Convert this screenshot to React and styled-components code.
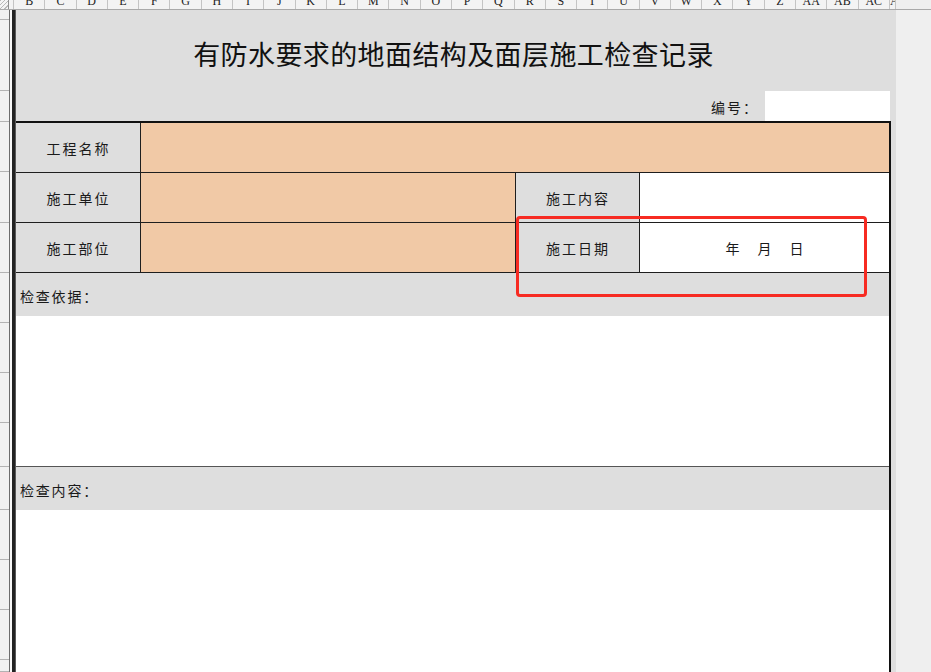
import React from 'react';
import styled, { createGlobalStyle } from 'styled-components';

const GlobalStyle = createGlobalStyle`
    html, body {
        margin: 0;
        padding: 0;
        background: #efefef;
    }
    body {
        font-family: "Noto Sans CJK SC", "Noto Sans", sans-serif;
        color: #1a1a1a;
    }
    * {
        box-sizing: border-box;
    }
`;

const Page = styled.div`
    position: relative;
    display: flex;
    flex-direction: column;
    width: 931px;
    height: 672px;
    overflow: hidden;
    background: #efefef;
`;

const ColumnBar = styled.div`
    display: flex;
    flex: 0 0 10px;
    height: 10px;
    border-bottom: 1px solid #a9a9a9;
`;

const Corner = styled.div`
    flex: 0 0 9px;
    border-right: 1px solid #8f8f8f;
    background: repeating-linear-gradient(135deg, #b9b9b9 0 1px, #f4f4f4 1px 3px);
`;

const ColHead = styled.div`
    flex: 0 0 ${p => p.$w}px;
    overflow: hidden;
    background: #f3f3f3;
    border-right: 1px solid #c4c4c4;
    font-family: "Liberation Serif", "DejaVu Serif", serif;
    font-size: 12px;
    line-height: 12px;
    color: #222;
    text-align: center;
`;

const ColLetter = styled.div`
    margin-top: -5px;
`;

const Body = styled.div`
    display: flex;
    flex: 1;
    min-height: 0;
`;

const RowHeads = styled.div`
    display: flex;
    flex-direction: column;
    flex: 0 0 10px;
    background: #f1f1f1;
    border-right: 1px solid #6d6d6d;
`;

const RowHead = styled.div`
    flex: 0 0 ${p => p.$h}px;
    border-bottom: 1px solid #b3b3b3;
`;

const FreezeGap = styled.div`
    flex: 0 0 2px;
    background: #f7f7f7;
`;

const FreezeRule = styled.div`
    flex: 0 0 4px;
    border-left: 3px solid #222;
    background: #5a5a5a;
`;

const Sheet = styled.div`
    display: flex;
    flex-direction: column;
    flex: 0 0 880px;
    background: #dedede;
`;

const TitleArea = styled.div`
    flex: 0 0 111px;
    width: 875px;
    display: flex;
    flex-direction: column;
`;

const Title = styled.h1`
    margin: 0;
    height: 81px;
    padding-top: 6px;
    font-size: 27px;
    font-weight: 400;
    line-height: 75px;
    letter-spacing: 0.4px;
    text-align: center;
    color: #111;
`;

const NumberRow = styled.div`
    display: flex;
    justify-content: flex-end;
    align-items: stretch;
    height: 30px;
    padding-right: 1px;
`;

const NumberLabel = styled.span`
    padding-right: 6px;
    font-size: 14px;
    letter-spacing: 2px;
    line-height: 33px;
`;

const NumberBox = styled.div`
    width: 125px;
    background: #fff;
`;

const Form = styled.div`
    display: flex;
    flex-direction: column;
    flex: 1;
    width: 875px;
    border-top: 2px solid #111;
    border-right: 2px solid #111;
`;

const Grid = styled.div`
    display: grid;
    grid-template-columns: 125px 375px 124px 1fr;
    grid-auto-rows: 50px;
`;

const tones = {
    label: '#dedede',
    fill: '#f1c9a6',
    blank: '#ffffff',
};

const Cell = styled.div`
    grid-column: span ${p => p.$span || 1};
    display: flex;
    align-items: center;
    justify-content: center;
    gap: 18px;
    background: ${p => tones[p.$tone]};
    border-bottom: 1px solid #1e1e1e;
    border-right: ${p => (p.$last ? 'none' : '1px solid #1e1e1e')};
    font-size: 14px;
    letter-spacing: ${p => (p.$tone === 'label' ? '2px' : '0')};
    padding-left: ${p => (p.$tone === 'label' ? '1px' : '0')};
`;

const SectionHead = styled.div`
    flex: 0 0 ${p => p.$h}px;
    display: flex;
    align-items: center;
    padding: 2px 0 0 4px;
    background: #dedede;
    font-size: 14px;
    letter-spacing: 1.8px;
`;

const SectionBody = styled.div`
    flex: ${p => (p.$h ? `0 0 ${p.$h}px` : '1')};
    background: #fff;
    border-bottom: ${p => (p.$h ? '1px solid #555' : 'none')};
`;

const Highlight = styled.div`
    position: absolute;
    left: 516px;
    top: 216px;
    width: 351px;
    height: 81px;
    border: 3px solid #f72b22;
    border-radius: 4px;
    pointer-events: none;
`;

const letters = 'B C D E F G H I J K L M N O P Q R S T U V W X Y Z AA AB AC AD'.split(' ');
const rowBounds = [20, 91, 122, 172, 223, 273, 323, 373, 423, 467, 510, 560, 610, 660, 672];

const rowHeights = rowBounds.map((b, i) => b - (i === 0 ? 10 : rowBounds[i - 1]));

export default function App() {
    return (
        <Page>
            <GlobalStyle />
            <ColumnBar>
                <Corner />
                <ColHead $w={5} />
                {letters.map((l, i) => (
                    <ColHead key={l} $w={i === letters.length - 1 ? 6 : 31.286}>
                        <ColLetter>{l}</ColLetter>
                    </ColHead>
                ))}
            </ColumnBar>
            <Body>
                <RowHeads>
                    {rowHeights.map((h, i) => (
                        <RowHead key={i} $h={h} />
                    ))}
                </RowHeads>
                <FreezeGap />
                <FreezeRule />
                <Sheet>
                    <TitleArea>
                        <Title>有防水要求的地面结构及面层施工检查记录</Title>
                        <NumberRow>
                            <NumberLabel>编号：</NumberLabel>
                            <NumberBox />
                        </NumberRow>
                    </TitleArea>
                    <Form>
                        <Grid>
                            <Cell $tone="label">工程名称</Cell>
                            <Cell $tone="fill" $span={3} $last />
                            <Cell $tone="label">施工单位</Cell>
                            <Cell $tone="fill" />
                            <Cell $tone="label">施工内容</Cell>
                            <Cell $tone="blank" $last />
                            <Cell $tone="label">施工部位</Cell>
                            <Cell $tone="fill" />
                            <Cell $tone="label">施工日期</Cell>
                            <Cell $tone="blank" $last>
                                <span>年</span>
                                <span>月</span>
                                <span>日</span>
                            </Cell>
                        </Grid>
                        <SectionHead $h={43}>检查依据：</SectionHead>
                        <SectionBody $h={151} />
                        <SectionHead $h={43}>检查内容：</SectionHead>
                        <SectionBody />
                    </Form>
                </Sheet>
            </Body>
            <Highlight />
        </Page>
    );
}
